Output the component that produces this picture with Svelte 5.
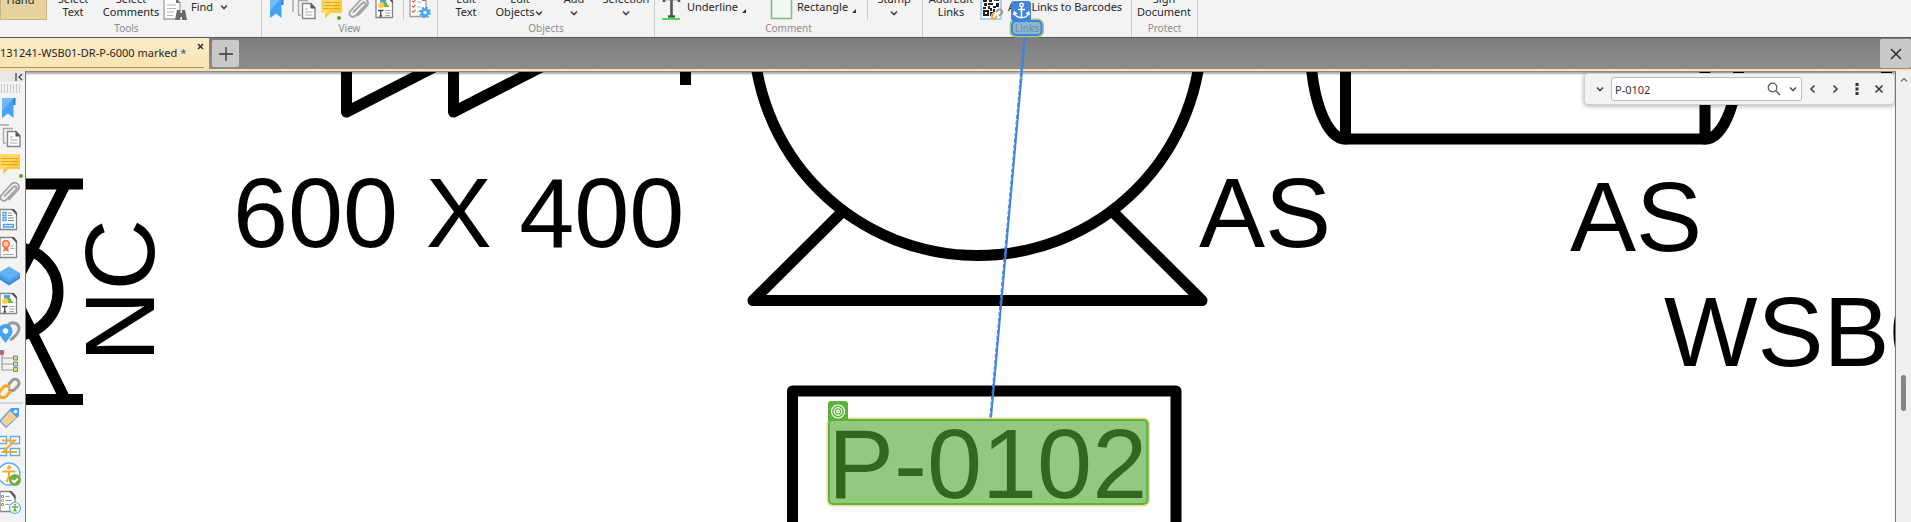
<script>
  let query = $state('P-0102');

  const panes = [
    'bookmark', 'pages', 'comment', 'clip', 'fields', 'signatures', 'layers', 'content',
    'places', 'model', 'links'
  ];
  const extraPanes = ['tags', 'order', 'access', 'report'];
</script>

{#snippet chevron(dir)}
  <svg class="chev" width="10" height="10" viewBox="0 0 10 10" aria-hidden="true">
    {#if dir === 'left'}
      <path d="M6.5 1.5L3 5l3.5 3.5" />
    {:else if dir === 'right'}
      <path d="M3.5 1.5L7 5L3.5 8.5" />
    {:else if dir === 'up'}
      <path d="M2 6.5L5 3.5L8 6.5" />
    {:else}
      <path d="M2 3.5L5 6.5L8 3.5" />
    {/if}
  </svg>
{/snippet}

{#snippet icon(name)}
  <svg class="ico" width="24" height="24" viewBox="0 0 24 24" aria-hidden="true">
    {#if name === 'bookmark'}
      <path d="M16 2h2.500v7H16z" fill="#2b7fc9" />
      <path d="M5 2h11.500v20L11 17.500L5 22z" fill="#45a3f5" />
      <path d="M5 2h11.500L5 15z" fill="#70baf8" />
    {:else if name === 'pages'}
      <path d="M12 1H1v15M16 4.500H6.500V19H9" fill="none" stroke="#a9a9a9" stroke-width="1.400" />
      <path d="M10.500 7.500H19l4 4V22.500H10.500z" fill="#fff" stroke="#858585" stroke-width="1.400" />
      <path d="M18.500 7v5.500H23.500z" fill="#555" />
      <path d="M13 13h3M13 16h7.500M13 19h7.500" stroke="#a9a9a9" stroke-width="1.200" />
    {:else if name === 'comment'}
      <path d="M2 2h21v15H11.500L6 22.500V17H2z" fill="#ffca3a" />
      <path d="M2 2h21L8 17H2z" fill="#ffd866" />
      <path d="M4 6.500h17M4 9.500h17M4 12.500h17" stroke="#e3a91f" stroke-width="1" />
    {:else if name === 'clip'}
      <g fill="none" stroke="#a2a2a2" stroke-width="1.800" stroke-linecap="round">
        <path d="M7.500 16L16.500 7c2-1.800 4.200.5 2.500 2.500L9.500 19.500c-3.500 3.500-8-1-5-4.500L14 4.500c4.500-4.500 11 1 6.500 6L12 19.500" />
      </g>
    {:else if name === 'fields'}
      <path d="M3 1.500h12.500L19.500 6v15.500H3z" fill="#fff" stroke="#858585" stroke-width="1.300" />
      <path d="M14 1h3l3 3.500v3z" fill="#555" />
      <path d="M6 4.500h3v3H6zM6 9.500h3v3H6zM6.500 16.500h10v2.500h-10z" fill="#fff" stroke="#45a3f5" stroke-width="1.300" />
      <path d="M11 5h4M11 7.500h4M11 10h6M11 12.500h6" stroke="#8a8a8a" stroke-width="1.100" />
    {:else if name === 'signatures'}
      <path d="M3 1.500h12.500L19.500 6v15.500H3z" fill="#fff" stroke="#858585" stroke-width="1.300" />
      <path d="M14 1h3l3 3.500v3z" fill="#555" />
      <path d="M7.500 10L6 16l3-1.500L12 16l-1.500-6z" fill="#ff6b4a" />
      <circle cx="9" cy="8" r="3.300" fill="#ffd0a0" stroke="#ff7a45" stroke-width="1.800" />
      <path d="M13.500 12.500h4M13.500 10h3M6 18.500h11" stroke="#a9a9a9" stroke-width="1.100" />
    {:else if name === 'layers'}
      <path d="M1 11.500v3l11 7l11-7v-3z" fill="#3a8ddb" />
      <path d="M1 9v3l11 7l11-7V9z" fill="#4a9fec" />
      <path d="M12 2.500L23 9l-11 7L1 9z" fill="#62b2f7" />
    {:else if name === 'content'}
      <path d="M3 1.500h12.500L19.500 6v15.500H3z" fill="#fff" stroke="#858585" stroke-width="1.300" />
      <path d="M14 1h3l3 3.500v3z" fill="#555" />
      <path d="M7 3h6v6H7z" fill="#4aa5f5" />
      <path d="M12.500 5l4 6H9.500z" fill="#78b843" />
      <circle cx="8" cy="9" r="3" fill="#ffd040" />
      <path d="M5 14.500h5.500M7.700 14v6M6.500 20h2.500" stroke="#444" stroke-width="1.300" />
      <path d="M12 14.500h6M12 17h6M12 19.500h5" stroke="#a9a9a9" stroke-width="1.100" />
    {:else if name === 'places'}
      <path d="M13 20l2.500-1.500c4-3.500 6.500-6.500 6.500-10a6 6 0 0 0-11.500-2" fill="none" stroke="#9a9a9a" stroke-width="3" />
      <path d="M8.500 23C5 18 1.500 15 1.500 11a7 7 0 0 1 14 0c0 4-3.500 7-7 12z" fill="#45a3f5" />
      <circle cx="8.500" cy="11" r="2.800" fill="#fff" />
    {:else if name === 'model'}
      <path d="M5 5v17h12M5 10h12M5 16h12" fill="none" stroke="#9a9a9a" stroke-width="1.200" />
      <path d="M2.500 2.500h4v4h-4z" fill="#f05a3c" stroke="#3d98e8" />
      <path d="M16.500 8h4v4h-4zM16.500 14h4v4h-4zM16.500 19.500h4v4h-4z" fill="#ffd040" stroke="#3d98e8" />
    {:else if name === 'links'}
      <g fill="none" stroke-width="3" stroke-linecap="round">
        <path d="M12 8l3-3.500a4 4 0 0 1 6 5.500l-4 4a4 4 0 0 1-4.500 0" stroke="#9a9a9a" />
        <path d="M13 16l-4 4.500a4 4 0 0 1-6-5.500l4-4.500a4 4 0 0 1 5 .5" stroke="#ffa626" />
      </g>
    {:else if name === 'tags'}
      <path d="M14 2h8v8L9 22L2 15z" fill="#45a3f5" />
      <path d="M13 5l6.500 6.500L9 20.500L3.800 15z" fill="#ffcf8a" />
      <circle cx="18.500" cy="5.500" r="1.800" fill="#fff" />
    {:else if name === 'order'}
      <path d="M1.500 2.500h8v7h-8zM13.500 2.500h9v7h-9zM1.500 14.500h8v7h-8zM13.500 14.500h9v7h-9z" fill="#fff" stroke="#5aadf5" stroke-width="1.300" />
      <path d="M5 6.500h13L6 18h14" fill="none" stroke="#ffa626" stroke-width="2" />
    {:else if name === 'access'}
      <circle cx="12" cy="12" r="11" fill="#fff" stroke="#5aadf5" stroke-width="1.300" />
      <circle cx="12" cy="5.500" r="2" fill="#ffa626" />
      <path d="M5.500 9.500h13M12 9.500v5M9.500 20l2.500-6l2.500 6" fill="none" stroke="#ffa626" stroke-width="2" />
      <circle cx="18" cy="18" r="6" fill="#6fae44" />
      <path d="M15 18l2.200 2.200L21 16.500" fill="none" stroke="#fff" stroke-width="1.800" />
    {:else if name === 'report'}
      <path d="M3 1.500h10L18 7v14.500H3z" fill="#fff" stroke="#858585" stroke-width="1.300" />
      <path d="M12 1h2.500l4 4.500v4z" fill="#555" />
      <path d="M4.500 5.500h2v2h-2z" fill="#fff" stroke="#45a3f5" />
      <path d="M4.500 9.500h2v2h-2z" fill="#fff" stroke="#ffa626" />
      <path d="M4.500 13.500h2v2h-2z" fill="#fff" stroke="#6fae44" />
      <path d="M8.500 6.500h4M8.500 10.500h6M8.500 14.500h4" stroke="#9a9a9a" />
      <circle cx="18" cy="18" r="5.500" fill="#fff" stroke="#5aadf5" stroke-width="1.200" />
      <circle cx="18" cy="14.800" r="1.100" fill="#5cb531" />
      <path d="M14.800 17h6.400M18 17v2M16.800 21.500l1.200-3l1.200 3" fill="none" stroke="#5cb531" stroke-width="1.300" />
    {:else if name === 'settings'}
      <path d="M3 0h12l4 5v15.500H3z" fill="#fff" stroke="#a0a0a0" stroke-width="1.300" />
      <path d="M15 0l4 5h-4z" fill="#777" />
      <path d="M5 5l1.200 1.200L8.500 4M5 10l1.200 1.200L8.500 9M5 15l1.200 1.200L8.500 14" fill="none" stroke="#f0633c" stroke-width="1.300" />
      <path d="M10.500 6h4M10.500 11h3M10.500 16h2" stroke="#a9a9a9" />
      <circle cx="18" cy="16.500" r="4.700" fill="none" stroke="#45a3f5" stroke-width="2.400" stroke-dasharray="2 1.700" />
      <circle cx="18" cy="16.500" r="3" fill="#fff" stroke="#45a3f5" stroke-width="2.400" />
    {:else if name === 'find'}
      <path d="M1 0h12l4 5v16H1z" fill="#fff" stroke="#a0a0a0" stroke-width="1.300" />
      <path d="M13 0l4 5h-4z" fill="#777" />
      <path d="M4 7h9M4 10.500h9M4 14h7M4 17.500h6" stroke="#b5b5b5" stroke-width="1.200" />
      <path d="M14 12h3v3h2v-3h3l2 10h-5v-3h-2v3h-5z" fill="#666b70" />
    {:else if name === 'underline'}
      <path d="M5 4V1h15v3M12.500 1v17M9 18.500h7" fill="none" stroke="#555" stroke-width="2.600" />
      <path d="M3 21h18" stroke="#4be04b" stroke-width="2" />
    {:else if name === 'rectangle'}
      <path d="M2.500 -6h20v26.500h-20z" fill="#f1f7f1" stroke="#7dba7d" stroke-width="1.500" />
    {:else if name === 'barcode'}
      <path d="M1 -2h20v23H1z" fill="#fff" stroke="#8ec5f5" stroke-width="1.500" />
      <path d="M3 1h4v3H3zM9 0h3v4H9zM14 1h5v2h-5zM4 5h3v3H4zM8 5h5v2H8zM16 5h3v4h-3zM13 8h3v2h-3zM8 8h2v3H8zM3 9h3v2H3zM3 12h6v6H3zM10 10h2v3h-2zM13 11h2v3h-2zM10 14h3v4h-3z" fill="#222" />
      <path d="M5 14h2v2H5zM15 1.500h1v1h-1z" fill="#fff" />
      <path d="M16 14l2-2a2.600 2.600 0 0 1 4 3l-3 3" fill="none" stroke="#9a9a9a" stroke-width="2" />
      <path d="M17 18l-2 2.500a2.600 2.600 0 0 1-3-4l2.500-2" fill="none" stroke="#ffa626" stroke-width="2" />
    {/if}
  </svg>
{/snippet}

<div class="app">
  <header class="ribbon">
    <section class="group tools">
      <div class="items">
        <button class="hand">Hand</button>
        <button class="w52">Select<br />Text</button>
        <button class="w64">Select<br />Comments</button>
        <button class="single">{@render icon('find')}<span>Find</span>{@render chevron()}</button>
      </div>
      <h2>Tools</h2>
    </section>
    <section class="group view">
      <div class="items icons">
        <button aria-label="Bookmarks">{@render icon('bookmark')}</button>
        <button aria-label="Thumbnails">{@render icon('pages')}</button>
        <button aria-label="Comments" class="dot">{@render icon('comment')}</button>
        <button aria-label="Attachments">{@render icon('clip')}</button>
        <button aria-label="Content">{@render icon('content')}</button>
        <i class="sep"></i>
        <button aria-label="View settings">{@render icon('settings')}</button>
      </div>
      <h2>View</h2>
    </section>
    <section class="group objects">
      <div class="items">
        <button class="w52">Edit<br />Text</button>
        <button class="w56">Edit<br />Objects{@render chevron()}</button>
        <button class="w52">Add<br />{@render chevron()}</button>
        <button class="w52">Selection<br />{@render chevron()}</button>
      </div>
      <h2>Objects</h2>
    </section>
    <section class="group comment">
      <div class="items">
        <button class="single">{@render icon('underline')}<span>Underline</span><i class="corner"></i></button>
        <button class="single rect">{@render icon('rectangle')}<span>Rectangle</span><i class="corner"></i></button>
        <i class="sep"></i>
        <button class="w52">Stamp<br />{@render chevron()}</button>
      </div>
      <h2>Comment</h2>
    </section>
    <section class="group link">
      <div class="items">
        <button class="w56">Add/Edit<br />Links</button>
        <button class="single">{@render icon('barcode')}<span>Add Links to Barcodes</span></button>
      </div>
      <h2>Links</h2>
    </section>
    <section class="group protect">
      <div class="items">
        <button class="w64">Sign<br />Document</button>
      </div>
      <h2>Protect</h2>
    </section>
  </header>

  <nav class="tabs" aria-label="Open documents">
    <div class="tab">
      <span>131241-WSB01-DR-P-6000 marked <b>*</b></span>
      <button aria-label="Close tab">
        <svg width="7" height="7" viewBox="0 0 7 7"><path d="M1 1l5 5M6 1L1 6" stroke="#333" stroke-width="1.500" /></svg>
      </button>
    </div>
    <button class="strip-btn" aria-label="New tab">
      <svg width="16" height="16" viewBox="0 0 16 16"><path d="M8 1v14M1 8h14" stroke="#333" stroke-width="1.300" /></svg>
    </button>
    <button class="strip-btn close" aria-label="Close document">
      <svg width="12" height="12" viewBox="0 0 12 12"><path d="M1 1l10 10M11 1L1 11" stroke="#222" stroke-width="1.400" /></svg>
    </button>
  </nav>

  <main class="work">
    <aside class="panes">
      <button class="collapse" aria-label="Collapse panes">
        <svg width="8" height="8" viewBox="0 0 8 8"><path d="M1 0v8M7 1L4 4l3 3" fill="none" stroke="#444" stroke-width="1.300" /></svg>
      </button>
      <div class="grip"></div>
      {#each panes as name}
        <button class:dot={name === 'comment'} aria-label={name}>{@render icon(name)}</button>
      {/each}
      <hr />
      {#each extraPanes as name}
        <button aria-label={name}>{@render icon(name)}</button>
      {/each}
    </aside>

    <div class="canvas">
      <svg class="drawing" role="img" aria-label="Piping drawing">
        <g transform="translate(-26 -71)">
          <g class="line">
            <path d="M20 184H83M20 399.500H83M64 187L18 278M64 397L18 304" class="butt" />
            <circle cx="14" cy="291.500" r="44" />
            <path d="M346.500 60V112L446 61M453.500 60V112L553 61" />
            <path d="M685.500 60V85M1886.500 60V82" class="butt" />
            <circle cx="977.500" cy="31.500" r="224" />
            <path d="M840 214L753 300.500H1202L1115 214" />
            <path d="M1345.500 60V139H1705V60" />
            <path d="M1345.500 139A35 94 0 0 1 1310.500 45M1705 139A35 94 0 0 0 1740 45" />
            <path d="M792.500 540V391H1176V540" />
          </g>
          <g class="label">
            <text x="233" y="247">600 X 400</text>
            <text x="1199" y="247">AS</text>
            <text x="1570" y="251">AS</text>
            <text x="1664" y="366">WSB01</text>
            <text transform="translate(154 362) rotate(-90)">NC</text>
            <text x="828" y="498">P-0102</text>
          </g>
        </g>
      </svg>
      <form class="find" onsubmit={(e) => e.preventDefault()}>
        <button type="button" aria-label="Find options">{@render chevron()}</button>
        <div class="field">
          <input aria-label="Find text" bind:value={query} />
          <svg width="14" height="14" viewBox="0 0 14 14" aria-hidden="true">
            <circle cx="5.500" cy="5.500" r="4.300" fill="none" stroke="#555" stroke-width="1.200" />
            <path d="M8.800 8.800L13 13" stroke="#555" stroke-width="1.400" />
          </svg>
          <button type="button" aria-label="Recent searches">{@render chevron()}</button>
        </div>
        <button type="button" aria-label="Previous">{@render chevron('left')}</button>
        <button type="button" aria-label="Next">{@render chevron('right')}</button>
        <button type="button" aria-label="More">
          <svg width="4" height="12" viewBox="0 0 4 12"><path d="M.5 0h3v3h-3zM.5 4.500h3v3h-3zM.5 9h3v3h-3z" fill="#333" /></svg>
        </button>
        <button type="button" aria-label="Close find">
          <svg width="10" height="10" viewBox="0 0 10 10"><path d="M1.500 1.500l7 7M8.500 1.500l-7 7" stroke="#333" stroke-width="1.500" /></svg>
        </button>
      </form>
    </div>

    <div class="scroll">
      <button aria-label="Scroll up">{@render chevron('up')}</button>
      <div class="thumb"></div>
    </div>
  </main>

  <svg class="overlay" aria-hidden="true">
    <rect x="1010.500" y="19.500" width="32.500" height="17" rx="5" fill="none" stroke="#9fcb86" stroke-width="2" />
    <rect x="1012" y="21" width="29.500" height="14" rx="4" fill="#4f8fb8" fill-opacity=".62" stroke="#3f83dc" stroke-width="2" />
    <rect x="1011" y="1" width="20" height="20" rx="3" fill="#3f83dc" />
    <g fill="none" stroke="#fff" stroke-width="1.500">
      <circle cx="1021.500" cy="5" r="1.700" />
      <path d="M1021.500 7V18M1018 9.500h7M1014.500 12.500c.5 7 13.500 7 14 0M1013.500 15l1-3l2.500 2M1029.500 15l-1-3l-2.500 2" />
    </g>
    <path d="M1025 37L991 418" stroke="#3f83dc" stroke-width="2" />
    <path d="M1023.800 37L989.800 418" stroke="#3f83dc" stroke-width="1" stroke-dasharray="4 2" />
    <rect x="827.500" y="418.500" width="321.500" height="87" rx="5" fill="none" stroke="#f5d79a" stroke-width="2" />
    <rect x="829" y="420" width="318.500" height="84" rx="4" fill="#51a830" fill-opacity=".62" stroke="#5cb338" stroke-width="2" />
    <path d="M828 421v-17a3 3 0 0 1 3-3h14a3 3 0 0 1 3 3v17z" fill="#5cb338" />
    <g fill="none" stroke="#fff" stroke-width="1.200">
      <circle cx="838" cy="411.500" r="6.500" />
      <circle cx="838" cy="411.500" r="3.800" />
      <circle cx="838" cy="411.500" r="1.300" />
    </g>
  </svg>
</div>

<style>
  :global(body) {
    margin: 0;
  }
  .app {
    position: relative;
    display: flex;
    flex-direction: column;
    min-height: 100vh;
    overflow: hidden;
    background: #fff;
    color: #262626;
    font: 11px/13px 'Noto Sans', 'Open Sans', sans-serif;
  }
  button {
    padding: 0;
    border: 0;
    background: none;
    color: inherit;
    font: inherit;
    white-space: nowrap;
  }
  svg {
    flex: none;
  }
  .ico {
    display: block;
    overflow: visible;
  }
  .chev {
    vertical-align: middle;
  }
  .chev path {
    fill: none;
    stroke: #444;
    stroke-width: 1.6;
  }

  /* ribbon: only the lower part is scrolled into view */
  .ribbon {
    display: flex;
    height: 37px;
    overflow: hidden;
    background: #f3f3f3;
    border-bottom: 1px solid #555;
  }
  .group {
    box-sizing: border-box;
    display: flex;
    flex: none;
    flex-direction: column;
    border-right: 1px solid #cdcdcd;
  }
  .items {
    display: flex;
    align-items: flex-end;
    height: 20px;
  }
  .items button {
    padding-bottom: 2px;
    text-align: center;
  }
  .items .single {
    display: flex;
    align-items: center;
    gap: 4px;
    height: 24px;
    margin-bottom: -2px;
    padding: 0;
  }
  .items .single span {
    padding-bottom: 7px;
  }
  .items .single .chev {
    margin: 0 0 7px 2px;
  }
  .items .hand {
    box-sizing: border-box;
    width: 47px;
    height: 44px;
    padding: 2px 6px 0 0;
    border: 1px solid #c9b57d;
    background: #e6d3a0;
  }
  .items .w52 {
    width: 52px;
  }
  .items .w56 {
    width: 56px;
  }
  .items .w64 {
    width: 64px;
  }
  h2 {
    margin: 0;
    color: #8c8c8c;
    font-size: 10px;
    font-weight: 400;
    line-height: 17px;
    text-align: center;
  }
  .tools {
    width: 262px;
  }
  .tools h2 {
    padding-right: 8px;
  }
  .view {
    width: 176px;
  }
  .icons {
    gap: 3px;
    padding-left: 3px;
  }
  .icons button {
    position: relative;
    height: 24px;
    margin-bottom: 0;
  }
  .icons .sep {
    margin-left: 3px;
  }
  .sep {
    width: 1px;
    height: 30px;
    background: #cdcdcd;
  }
  .dot::after {
    content: '';
    position: absolute;
    right: 2px;
    bottom: 0;
    width: 4px;
    height: 4px;
    border-radius: 50%;
    background: #58a626;
  }
  .objects {
    width: 217px;
  }
  .objects .items {
    padding-left: 2px;
  }
  .comment {
    width: 268px;
  }
  .comment .items {
    padding-left: 4px;
  }
  .comment .items .sep {
    margin: 0 0 0 11px;
  }
  .comment .rect {
    margin-left: 23px;
  }
  .corner {
    width: 0;
    height: 0;
    margin-top: 2px;
    border-left: 4px solid transparent;
    border-bottom: 4px solid #333;
  }
  .link {
    width: 209px;
  }
  .link .items {
    gap: 1px;
  }
  .protect {
    width: 66px;
  }

  .tabs {
    display: flex;
    align-items: center;
    height: 31px;
    background:
      repeating-linear-gradient(45deg, rgba(255, 255, 255, 0.03) 0 1px, transparent 1px 3px),
      linear-gradient(#7c7c7c, #8c8c8c);
    border-bottom: 2px solid #fae3ae;
  }
  .tab {
    position: relative;
    box-sizing: border-box;
    display: flex;
    width: 209px;
    height: 31px;
    background: linear-gradient(#fbecc8, #fae3b0);
  }
  .tab span {
    line-height: 30px;
    white-space: nowrap;
  }
  .tab b {
    color: #1f5f8f;
    font-weight: 400;
  }
  .tab button {
    height: 14px;
    margin-left: auto;
    margin-right: 5px;
  }
  .tab::after {
    content: '';
    position: absolute;
    left: 0;
    right: 5px;
    bottom: 1px;
    height: 1px;
    background: #a3946c;
  }
  .strip-btn {
    display: flex;
    align-items: center;
    justify-content: center;
    width: 27px;
    height: 27px;
    margin-left: 3px;
    border-radius: 2px;
    background: #c9c9c9;
  }
  .close {
    width: 31px;
    height: 29px;
    margin-left: auto;
  }

  .work {
    display: flex;
    flex: 1;
  }
  .panes {
    display: flex;
    flex: none;
    flex-direction: column;
    width: 25px;
    overflow: hidden;
    background: #f3f3f3;
    border-right: 1px solid #777;
  }
  .panes button {
    position: relative;
    display: flex;
    flex: none;
    align-items: center;
    justify-content: flex-end;
    height: 28px;
    padding-right: 4px;
  }
  .panes .collapse {
    height: 11px;
    padding-right: 2px;
    background: #e8e8e8;
  }
  .grip {
    flex: none;
    height: 9px;
    margin: 2px 3px 1px 1px;
    background: repeating-linear-gradient(90deg, #c4c4c4 0 1px, transparent 1px 3px);
  }
  .panes hr {
    flex: none;
    width: 23px;
    height: 2px;
    margin: 0;
    border: 0;
    background: #d6d6d6;
  }
  .canvas {
    position: relative;
    flex: 1;
    min-width: 0;
    overflow: hidden;
    border-top: 1px solid #8a8a8a;
    border-right: 1px solid #777;
    box-shadow: inset 0 3px 2px -1px #aaa;
  }
  .drawing {
    position: absolute;
    inset: -1px 0 0;
    width: 100%;
    height: calc(100% + 1px);
  }
  .line {
    fill: none;
    stroke: #000;
    stroke-width: 11;
    stroke-linecap: round;
    stroke-linejoin: round;
  }
  .butt {
    stroke-linecap: butt;
  }
  .label {
    fill: #000;
    font: 99px 'Liberation Sans', Arial, sans-serif;
  }
  .find {
    position: absolute;
    top: 1px;
    right: 0;
    box-sizing: border-box;
    display: flex;
    align-items: center;
    height: 32px;
    padding: 0 4px;
    border: 1px solid #d0d0d0;
    border-radius: 4px;
    background: #f3f3f3;
    box-shadow: 0 1px 5px rgba(0, 0, 0, 0.35);
  }
  .find button {
    display: flex;
    align-items: center;
    justify-content: center;
    width: 22px;
    height: 22px;
  }
  .field {
    box-sizing: border-box;
    display: flex;
    align-items: center;
    width: 191px;
    height: 24px;
    border: 1px solid #bdbdbd;
    border-radius: 3px;
    background: #fff;
  }
  .field .chev path {
    stroke: #555;
  }
  .field button {
    width: 16px;
    margin-left: 4px;
  }
  input {
    flex: 1;
    min-width: 0;
    padding: 0 0 0 3px;
    border: 0;
    outline: 0;
    background: none;
    color: #333;
    font: inherit;
  }
  .scroll {
    display: flex;
    flex: none;
    flex-direction: column;
    align-items: center;
    width: 15px;
    background: #efefef;
  }
  .scroll button {
    height: 14px;
  }
  .scroll .chev path {
    stroke: #777;
    stroke-width: 1.3;
  }
  .thumb {
    width: 5px;
    height: 36px;
    margin-top: 290px;
    border-radius: 3px;
    background: #858585;
  }
  .overlay {
    position: absolute;
    inset: 0;
    width: 100%;
    height: 100%;
    pointer-events: none;
  }
</style>
